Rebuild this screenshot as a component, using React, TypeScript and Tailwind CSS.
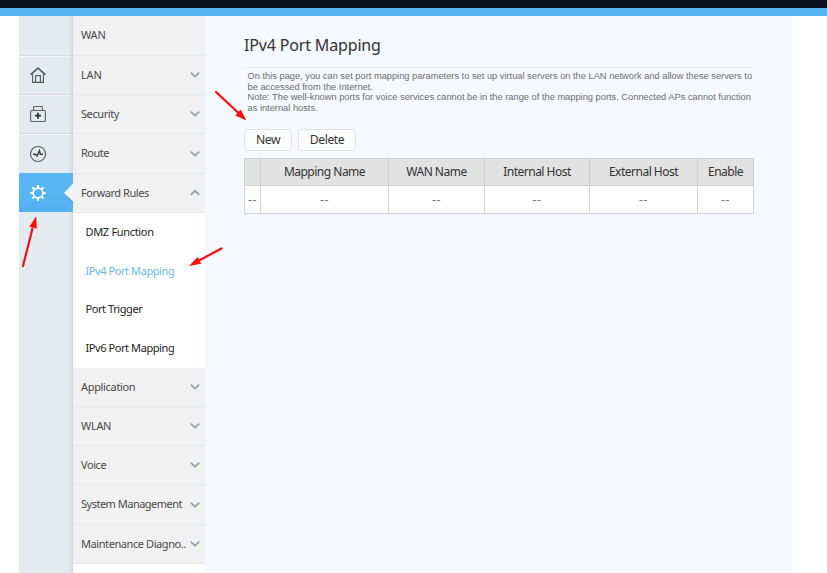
import React from "react";

const uiFont = "font-['Noto_Sans','Open_Sans',sans-serif]";

function Chevron({ up = false }: { up?: boolean }) {
  return (
    <svg className="block h-[6px] w-[10px] shrink-0 overflow-visible" viewBox="0 0 10 6" fill="none" stroke="#a0a4aa" strokeWidth="1.9">
      <path d={up ? "M.8 4.7 5 .7l4.2 4" : "M.8.6 5 4.6l4.2-4"} />
    </svg>
  );
}

function HomeIcon() {
  return (
    <svg className="h-4 w-4" viewBox="0 0 16 16" fill="none" stroke="#555b5e">
      <path d="M.6 7.600 8 1.2l7.400 6.400" strokeWidth="1.7" />
      <path d="M2.6 7v8.400h10.800V7M5.600 15V8.600h4.800V15" strokeWidth="1.1" />
    </svg>
  );
}

function KitIcon() {
  return (
    <svg className="h-4 w-4" viewBox="0 0 16 16" fill="none" stroke="#5d6366">
      <rect x=".6" y="4.5" width="14.8" height="11" rx="1" strokeWidth="1.1" />
      <path d="M3.600 4.200V1.400q0-.9.9-.9h7q.9 0 .9.9v2.800" strokeWidth="1.1" />
      <path d="M8 6.700v6M5 9.700h6" stroke="#333" strokeWidth="1.8" />
    </svg>
  );
}

function PulseIcon() {
  return (
    <svg className="h-4 w-4 overflow-visible" viewBox="0 0 16 16" fill="none" stroke="#555b5e">
      <circle cx="8" cy="8" r="7.500" strokeWidth="1.1" />
      <path d="M3 8.300h2.500l1.500 1.700 2.400-5.200.9 3.500H13" stroke="#3c4144" strokeWidth="1.500" />
    </svg>
  );
}

function GearIcon() {
  return (
    <svg className="h-4 w-4 overflow-visible" viewBox="0 0 16 16" fill="none" stroke="#fff">
      <circle cx="8" cy="8" r="4.9" strokeWidth="1.6" />
      <path d="M8 .2v2.8M8 13v2.8M.2 8h2.800M13 8h2.800M2.400 2.400l2 2M11.600 11.600l2 2M2.400 13.600l2-2M11.600 4.400l2-2" strokeWidth="2" />
    </svg>
  );
}

function Rail() {
  const cell = "flex w-full items-center border-b border-[#d3d9dc] pl-[11px] shadow-[0_1px_0_#f3f7f8]";
  return (
    <div className="relative flex w-[54px] shrink-0 flex-col bg-[#e3ebee]">
      <div className={`${cell} h-[40px]`} />
      <div className={`${cell} h-[39px]`}><HomeIcon /></div>
      <div className={`${cell} h-[39px]`}><KitIcon /></div>
      <div className="flex h-[39px] items-center pl-[11px]"><PulseIcon /></div>
      <div className="absolute inset-y-0 right-0 w-1 bg-linear-to-r from-transparent to-[#cfd6d9]" />
      <div className="relative flex h-[39px] items-center justify-between bg-linear-to-b from-[#5bb9f7] to-[#54b0ee] pl-[11px]">
        <GearIcon />
        <svg className="h-[22px] w-[13px]" viewBox="0 0 13 22">
          <path d="M13 3 5 12l6 8 2 1z" fill="#3e8fc8" opacity=".45" />
          <path d="M13 1.5 4 11l9 8.500z" fill="#f2f5f7" />
        </svg>
      </div>
    </div>
  );
}

function MenuRow({ label, height = "h-[39px]", arrow = "down", spacing = "tracking-[-0.42px]" }: { label: string; height?: string; arrow?: "down" | "up" | "none"; spacing?: string }) {
  return (
    <div className={`flex ${height} items-center justify-between border-b border-[#e5e6e7] bg-[#f1f1f1] pr-[5px] pl-2 text-[11px] text-[#494949]`}>
      <span className={`whitespace-nowrap ${spacing}`}>{label}</span>
      {arrow !== "none" && <Chevron up={arrow === "up"} />}
    </div>
  );
}

function Menu() {
  const sub = "flex items-center pl-[12.5px] text-[11px] whitespace-nowrap";
  return (
    <div className={`w-[132px] shrink-0 bg-white ${uiFont}`}>
      <MenuRow label="WAN" height="h-[40px]" arrow="none" spacing="tracking-[-0.2px]" />
      <MenuRow label="LAN" spacing="tracking-[-0.2px]" />
      <MenuRow label="Security" />
      <MenuRow label="Route" height="h-[40px]" spacing="tracking-[-0.5px]" />
      <MenuRow label="Forward Rules" spacing="tracking-[-0.45px]" arrow="up" />
      <div className={`${sub} h-[39px] tracking-[-0.32px] text-[#222]`}>DMZ Function</div>
      <div className={`${sub} h-[38px] tracking-[-0.42px] text-[#66b8f2]`}>IPv4 Port Mapping</div>
      <div className={`${sub} h-[39px] tracking-[-0.42px] text-[#222]`}>Port Trigger</div>
      <div className={`${sub} h-[39px] tracking-[-0.42px] text-[#222]`}>IPv6 Port Mapping</div>
      <MenuRow label="Application" spacing="tracking-[-0.33px]" />
      <MenuRow label="WLAN" spacing="tracking-[-0.3px]" />
      <MenuRow label="Voice" />
      <MenuRow label="System Management" height="h-[40px]" spacing="tracking-[-0.5px]" />
      <MenuRow label="Maintenance Diagno.." spacing="tracking-[-0.42px]" />
    </div>
  );
}

const columns = ["", "Mapping Name", "WAN Name", "Internal Host", "External Host", "Enable"];

function Content() {
  const button = "h-[22px] rounded-[4px] border border-[#dfe2e5] bg-white text-[12.2px] leading-[20px] tracking-[-0.45px] text-[#333]";
  return (
    <main className={`w-[587px] shrink-0 bg-[#f5f8fd] pl-[39px] text-[#333] ${uiFont}`}>
      <div className="w-[510px]">
        <h1 className="h-[52px] border-b border-[#e8ebed] pt-[17px] text-[16px] leading-[24px] tracking-[-0.16px]">IPv4 Port Mapping</h1>
        <div className="mt-[3px] ml-[3.5px] h-[42px] font-['Liberation_Sans',Arial,sans-serif] text-[9.29px] leading-[10.5px] whitespace-nowrap text-[#6e6e6e]">
          <p>On this page, you can set port mapping parameters to set up virtual servers on the LAN network and allow these servers to</p>
          <p>be accessed from the Internet.</p>
          <p>Note: The well-known ports for voice services cannot be in the range of the mapping ports. Connected APs cannot function</p>
          <p>as internal hosts.</p>
        </div>
        <div className="mt-[16px] flex gap-[6px]">
          <button className={`${button} w-[48px]`}>New</button>
          <button className={`${button} w-[58px]`}>Delete</button>
        </div>
        <table className="mt-[7px] w-[510px] table-fixed border-collapse bg-white text-center text-[12px]">
          <colgroup>
            <col className="w-[16px]" />
            <col className="w-[128px]" />
            <col className="w-[96px]" />
            <col className="w-[105px]" />
            <col className="w-[108px]" />
            <col className="w-[56px]" />
          </colgroup>
          <thead>
            <tr className="h-[27px] bg-[#e2e2e2]">
              {columns.map((c) => (
                <th key={c} className="border border-[#cfcfcf] p-0 leading-[18px] font-normal tracking-[-0.5px] whitespace-nowrap">{c}</th>
              ))}
            </tr>
          </thead>
          <tbody>
            <tr className="h-[28px]">
              {columns.map((c) => (
                <td key={c} className="border border-[#d4d4d4] p-0 leading-[18px] tracking-[0.7px] text-[#777]">--</td>
              ))}
            </tr>
          </tbody>
        </table>
      </div>
    </main>
  );
}

function Annotations() {
  return (
    <svg className="pointer-events-none absolute inset-0 h-[573px] w-[827px]" viewBox="0 0 827 573" stroke="#fb0d0d" fill="#fb0d0d" strokeLinecap="round">
      <path d="M216 92 238 112.500M23 266l9.500-37.500M221.500 248.500 199 260.500" strokeWidth="2.2" fill="none" />
      <path d="M246.500 120.500 235.300 115.600 240.700 109.500zM36.200 216 36.800 228.500 29.500 226.800zM189 266 197.500 257 201.200 263.800z" stroke="none" />
    </svg>
  );
}

export default function App() {
  return (
    <div className="relative h-[573px] w-[827px] overflow-hidden bg-white">
      <div className="h-2 bg-[#0b0e1b]" />
      <div className="h-2 bg-[#56b2f0]" />
      <div className="flex h-[557px] pl-[19px]">
        <Rail />
        <Menu />
        <Content />
      </div>
      <Annotations />
    </div>
  );
}
